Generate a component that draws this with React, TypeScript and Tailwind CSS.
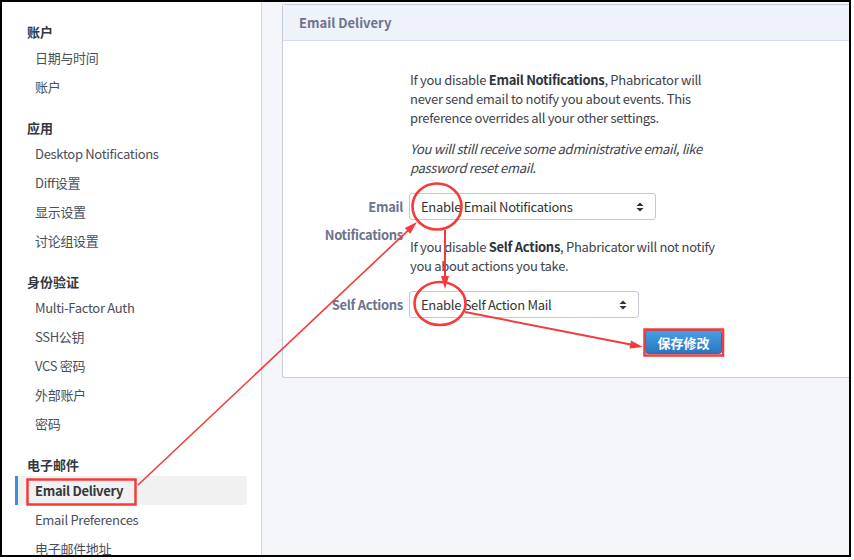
import React from "react";

const sections = [
  { title: "账户", items: ["日期与时间", "账户"] },
  { title: "应用", items: ["Desktop Notifications", "Diff设置", "显示设置", "讨论组设置"] },
  { title: "身份验证", items: ["Multi-Factor Auth", "SSH公钥", "VCS 密码", "外部账户", "密码"] },
  { title: "电子邮件", items: ["Email Delivery", "Email Preferences", "电子邮件地址"] },
];

function SortIcon() {
  return (
    <svg width="8" height="12" viewBox="0 0 8 12" className="shrink-0">
      <path d="M4 1.5 L7.5 5 H0.5 Z M4 10.5 L0.5 7 H7.5 Z" fill="#333" />
    </svg>
  );
}

function FakeSelect({ value, width }: { value: string; width: string }) {
  return (
    <div
      className={`${width} h-[27px] shrink-0 border border-[#c4cad6] rounded-[3px] bg-white pl-[11px] pr-[11px] flex items-center justify-between text-[13px] text-[#333]`}
    >
      <span className="whitespace-nowrap">{value}</span>
      <SortIcon />
    </div>
  );
}

function Sidebar() {
  return (
    <aside className="w-[260px] shrink-0 bg-white border-r border-[#cfd5df] pt-[19px] overflow-hidden">
      {sections.map((s, i) => (
        <div key={s.title} className={i === 0 ? "" : "mt-[16px]"}>
          <div className="h-[22px] flex items-center pl-[25px] text-[13px] font-bold text-[#33373f]">{s.title}</div>
          {s.items.map((item) => {
            const active = item === "Email Delivery";
            return (
              <div
                key={item}
                className={
                  active
                    ? "ml-[13px] mr-[14px] h-[29px] flex items-center pl-[17px] border-l-[3px] border-[#3a8fdb] bg-[#f1f1f2] rounded-r-[3px] text-[13px] font-bold tracking-[-0.3px] text-[#33373f]"
                    : "ml-[13px] mr-[14px] h-[29px] flex items-center pl-[20px] text-[13px] tracking-[-0.3px] text-[#4a4e58]"
                }
              >
                {item}
              </div>
            );
          })}
        </div>
      ))}
    </aside>
  );
}

function arrowHead(x1: number, y1: number, x2: number, y2: number, len = 13, half = 4) {
  const a = Math.atan2(y2 - y1, x2 - x1);
  const bx = x2 - len * Math.cos(a);
  const by = y2 - len * Math.sin(a);
  const px = -Math.sin(a) * half;
  const py = Math.cos(a) * half;
  return `${x2},${y2} ${bx + px},${by + py} ${bx - px},${by - py}`;
}

function Annotations() {
  const red = "#f43b3b";
  const arrows: [number, number, number, number, number][] = [
    [138, 485, 417, 222, 1.6],
    [445, 230, 445, 289, 2],
    [465, 312, 643, 347, 2],
  ];
  return (
    <svg className="absolute inset-0 pointer-events-none" width="854" height="560" viewBox="0 0 854 560">
      <rect x="27.5" y="479.5" width="108" height="25" fill="none" stroke={red} strokeWidth="2.5" />
      <rect x="644.5" y="329.5" width="78.5" height="26" fill="none" stroke={red} strokeWidth="2.5" />
      <ellipse cx="437" cy="206.5" rx="24.5" ry="23" fill="none" stroke={red} strokeWidth="2.6" />
      <ellipse cx="440" cy="303.5" rx="25.5" ry="21.5" fill="none" stroke={red} strokeWidth="2.6" />
      {arrows.map(([x1, y1, x2, y2, w], i) => {
        const a = Math.atan2(y2 - y1, x2 - x1);
        const ex = x2 - 10 * Math.cos(a);
        const ey = y2 - 10 * Math.sin(a);
        return (
          <g key={i}>
            <line x1={x1} y1={y1} x2={ex} y2={ey} stroke={red} strokeWidth={w} />
            <polygon points={arrowHead(x1, y1, x2, y2)} fill={red} />
          </g>
        );
      })}
    </svg>
  );
}

export default function App() {
  return (
    <div className="w-[854px] h-[560px] bg-white relative font-['Noto_Sans_CJK_SC',sans-serif]">
      <div className="w-[851px] h-[557px] border-2 border-black flex overflow-hidden">
        <Sidebar />
        <main className="flex-1 bg-[#f3f5f8] pl-[20px] pt-[2px]">
          <section className="border border-r-0 border-[#c7ccd9] rounded-l-[3px] bg-white">
            <div className="h-[36px] bg-[#edf2fb] border-b border-[#d5dcea] flex items-center pl-[16px] text-[13px] font-bold text-[#6b748c]">
              Email Delivery
            </div>
            <div className="pt-[29px] pb-[23px] text-[13px] tracking-[-0.3px] text-[#3e424a] leading-[19px]">
              <div className="ml-[127px] whitespace-nowrap">
                If you disable <b className="font-bold text-[#2f333a]">Email Notifications</b>, Phabricator will
                <br />
                never send email to notify you about events. This
                <br />
                preference overrides all your other settings.
              </div>
              <div className="ml-[127px] mt-[12px] italic whitespace-nowrap">
                You will still receive some administrative email, like
                <br />
                password reset email.
              </div>
              <div className="mt-[16px] h-[27px] flex">
                <div className="w-[120px] mr-[6px] text-right font-bold text-[#6b748c] leading-[28px] whitespace-nowrap">
                  Email
                  <br />
                  Notifications
                </div>
                <FakeSelect value="Enable Email Notifications" width="w-[247px]" />
              </div>
              <div className="ml-[127px] mt-[17px] whitespace-nowrap">
                If you disable <b className="font-bold text-[#2f333a]">Self Actions</b>, Phabricator will not notify
                <br />
                you about actions you take.
              </div>
              <div className="mt-[16px] h-[27px] flex">
                <div className="w-[120px] mr-[6px] text-right font-bold text-[#6b748c] leading-[28px] whitespace-nowrap">
                  Self Actions
                </div>
                <FakeSelect value="Enable Self Action Mail" width="w-[230px]" />
              </div>
              <div className="mt-[12px] flex">
                <button className="ml-[362px] w-[77px] h-[24px] rounded-[3px] border border-[#2a6aa8] bg-gradient-to-b from-[#45a0e6] to-[#2b77bf] text-white text-[13px] font-bold tracking-normal leading-none">
                  保存修改
                </button>
              </div>
            </div>
          </section>
        </main>
      </div>
      <Annotations />
    </div>
  );
}
